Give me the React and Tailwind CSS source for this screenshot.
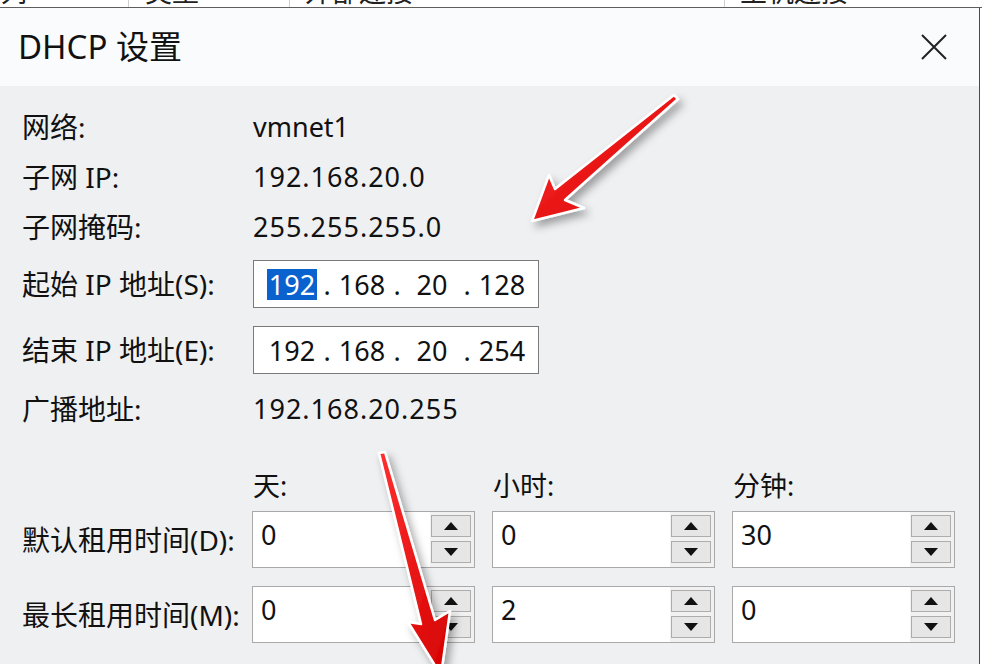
import React from "react";

function Spin({ value }) {
  return (
    <div className="flex h-[57px] w-[223px] border border-[#a9a9a9] bg-[#f1f1f1]">
      <div className="flex-1 bg-white pl-[8px] pt-[5px] text-[27px] leading-[36px] text-[#111]">{value}</div>
      <div className="flex w-[44px] flex-col gap-[4px] pl-[1px] pr-[3px] pt-[3px]">
        <div className="flex h-[22px] w-[40px] items-center justify-center border border-[#adadad] bg-[#e6e6e6]">
          <svg width="14" height="8" viewBox="0 0 14 8"><polygon points="7,0 14,8 0,8" fill="#111" /></svg>
        </div>
        <div className="flex h-[22px] w-[40px] items-center justify-center border border-[#adadad] bg-[#e6e6e6]">
          <svg width="14" height="8" viewBox="0 0 14 8"><polygon points="0,0 14,0 7,8" fill="#111" /></svg>
        </div>
      </div>
    </div>
  );
}

function IpBox({ parts, highlight }) {
  return (
    <div className="flex h-[48px] w-[286px] items-center border border-[#7a7a7a] bg-white pl-[8px] text-[27px] text-[#111]">
      {parts.map((p, i) => (
        <React.Fragment key={i}>
          <div className="flex w-[60px] justify-center">
            {highlight && i === 0 ? (
              <span className="bg-[#0a62cf] px-[2px] leading-[31px] text-white">{p}</span>
            ) : (
              <span className="leading-[31px]">{p}</span>
            )}
          </div>
          {i < 3 && <div className="w-[10px] text-center leading-[31px]">.</div>}
        </React.Fragment>
      ))}
    </div>
  );
}

function Row({ label, children, cls }) {
  return (
    <div className={"flex items-center " + cls}>
      <div className="w-[231px] shrink-0 text-[28px] text-[#111]">{label}</div>
      {children}
    </div>
  );
}

export default function App() {
  return (
    <div className="relative h-[664px] w-[982px] overflow-hidden bg-white font-['Noto_Sans','Noto_Sans_CJK_SC',sans-serif]">
      {/* background table header peeking above dialog */}
      <div className="flex h-[8px] overflow-hidden border-b border-[#5e5e5e] text-[27px] leading-[28px] text-[#222]">
        <div className="w-[129px] shrink-0 border-r border-[#cfcfcf]"><div className="-mt-[22px]">列</div></div>
        <div className="w-[161px] shrink-0 border-r border-[#cfcfcf]"><div className="-mt-[22px] pl-[16px]">类型</div></div>
        <div className="w-[435px] shrink-0 border-r border-[#cfcfcf]"><div className="-mt-[22px] pl-[15px]">外部连接</div></div>
        <div className="flex-1"><div className="-mt-[22px] pl-[15px]">主机连接</div></div>
      </div>

      <div className="flex h-[656px] w-[980px] flex-col border-r border-[#4a4a4a]">
        {/* title bar */}
        <div className="flex h-[78px] shrink-0 items-center justify-between bg-[#fafbfc] pl-[18px] pr-[32px]">
          <div className="text-[33px] leading-[40px] text-[#111]">DHCP 设置</div>
          <svg width="26" height="26" viewBox="0 0 26 26">
            <path d="M1 1 L25 25 M25 1 L1 25" stroke="#222" strokeWidth="2" />
          </svg>
        </div>
        {/* body */}
        <div className="flex flex-1 flex-col bg-[#eff0f2] pl-[22px] pt-[16px]">
          <Row label="网络:" cls="h-[50px]"><div className="text-[27px] text-[#111]">vmnet1</div></Row>
          <Row label="子网 IP:" cls="h-[50px]"><div className="text-[27px] tracking-[1px] text-[#111]">192.168.20.0</div></Row>
          <Row label="子网掩码:" cls="h-[50px]"><div className="text-[27px] tracking-[1px] text-[#111]">255.255.255.0</div></Row>
          <Row label="起始 IP 地址(S):" cls="mt-[8px] h-[48px]"><IpBox parts={["192", "168", "20", "128"]} highlight /></Row>
          <Row label="结束 IP 地址(E):" cls="mt-[18px] h-[48px]"><IpBox parts={["192", "168", "20", "254"]} /></Row>
          <Row label="广播地址:" cls="mt-[10px] h-[50px]"><div className="text-[27px] tracking-[1px] text-[#111]">192.168.20.255</div></Row>
          <div className="mt-[37px] flex h-[30px] items-center gap-[17px] pl-[231px] text-[27px] text-[#111]">
            <div className="w-[223px]">天:</div>
            <div className="w-[223px]">小时:</div>
            <div className="w-[223px]">分钟:</div>
          </div>
          <div className="mt-[10px] flex items-center">
            <div className="w-[230px] shrink-0 text-[28px] text-[#111]">默认租用时间(D):</div>
            <div className="flex gap-[17px]"><Spin value="0" /><Spin value="0" /><Spin value="30" /></div>
          </div>
          <div className="mt-[18px] flex items-center">
            <div className="w-[230px] shrink-0 text-[28px] text-[#111]">最长租用时间(M):</div>
            <div className="flex gap-[17px]"><Spin value="0" /><Spin value="2" /><Spin value="0" /></div>
          </div>
        </div>
      </div>

      {/* annotation arrows */}
      <svg className="pointer-events-none absolute left-0 top-0" width="982" height="664" viewBox="0 0 982 664">
        <defs>
          <filter id="sh" x="-30%" y="-30%" width="160%" height="160%">
            <feDropShadow dx="4" dy="5" stdDeviation="4" floodColor="#000" floodOpacity="0.35" />
          </filter>
          <linearGradient id="g1" x1="0" y1="0" x2="1" y2="1">
            <stop offset="0" stopColor="#ff3030" />
            <stop offset="1" stopColor="#d40000" />
          </linearGradient>
        </defs>
        <polygon points="674,95 555,189 549,175 532,221 584,208 565,200 678,99" fill="url(#g1)" stroke="#fff" strokeWidth="2.5" strokeLinejoin="round" filter="url(#sh)" />
        <polygon points="379,453 421,624 408,622 441,675 450,611 435,620 385,452" fill="url(#g1)" stroke="#fff" strokeWidth="2.5" strokeLinejoin="round" filter="url(#sh)" />
      </svg>
    </div>
  );
}
